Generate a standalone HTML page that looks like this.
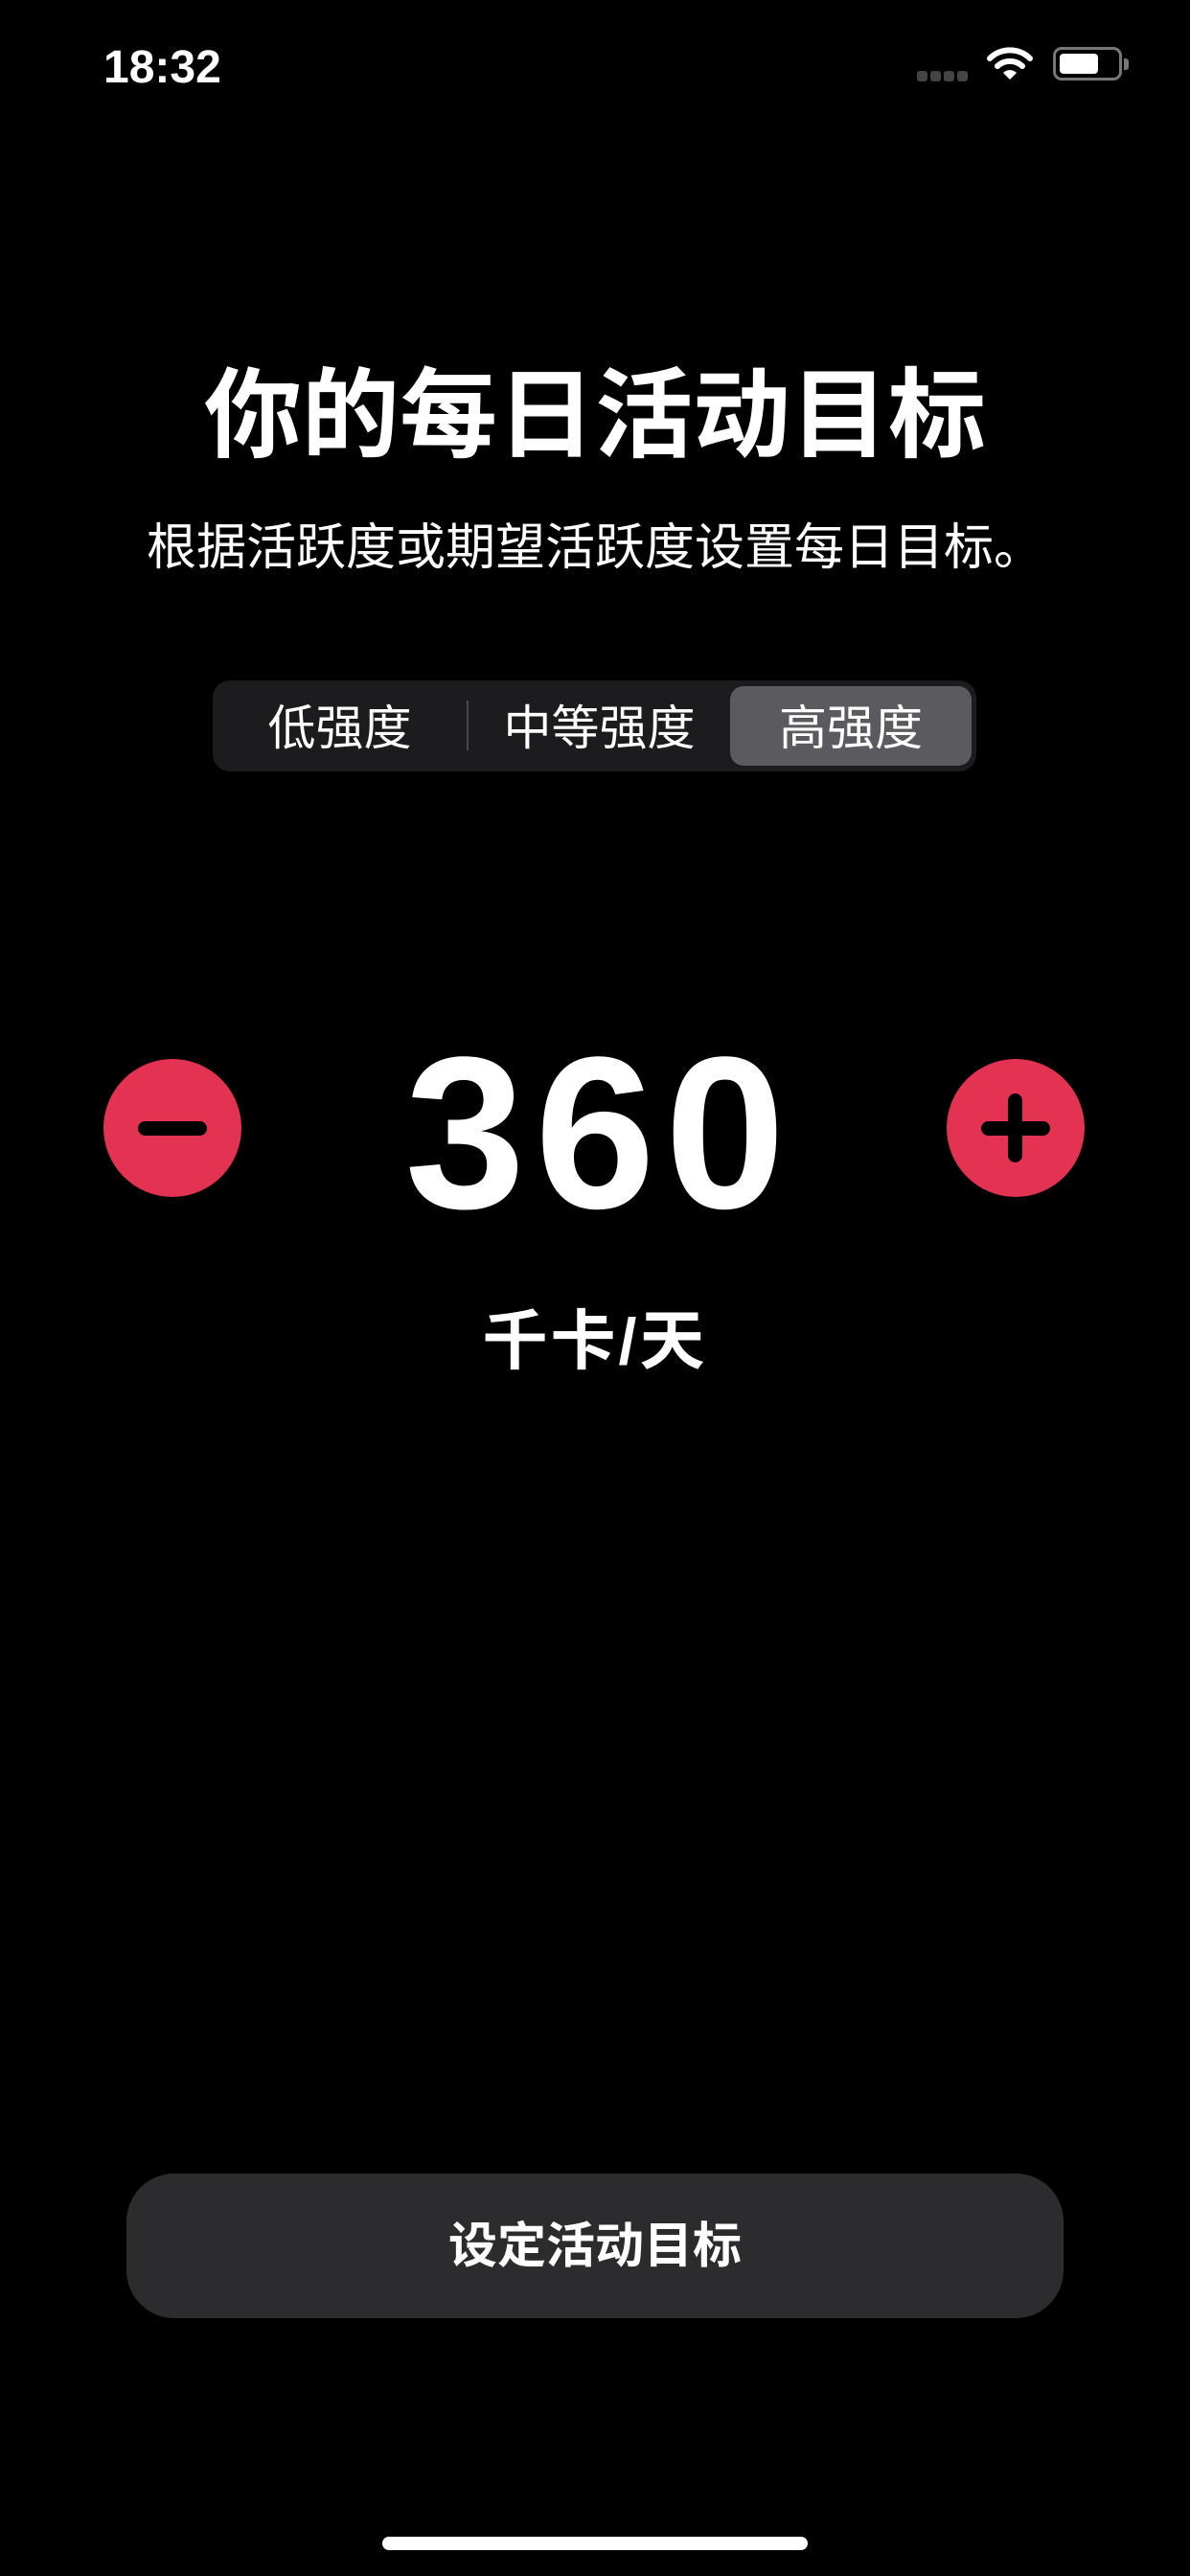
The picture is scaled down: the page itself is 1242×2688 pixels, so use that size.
<!DOCTYPE html>
<html><head><meta charset="utf-8"><style>
*{margin:0;padding:0;box-sizing:border-box}
body{width:1242px;height:2688px;background:#000;position:relative;overflow:hidden;font-family:"Liberation Sans","Noto Sans CJK SC",sans-serif;color:#fff}
.abs{position:absolute}
.c{left:0;width:1242px;text-align:center}
</style></head><body>
<div class="abs" style="left:108px;top:43px;font-size:48px;font-weight:600;line-height:56px">18:32</div>
<div class="abs" style="left:957px;top:74px;width:54px;height:12px">
<span class="abs" style="left:0;top:0;width:11px;height:11px;border-radius:3px;background:#444"></span>
<span class="abs" style="left:14px;top:0;width:11px;height:11px;border-radius:3px;background:#444"></span>
<span class="abs" style="left:28px;top:0;width:11px;height:11px;border-radius:3px;background:#444"></span>
<span class="abs" style="left:42px;top:0;width:11px;height:11px;border-radius:3px;background:#444"></span>
</div>
<svg class="abs" style="left:1030px;top:48px" width="48" height="36" viewBox="0 0 48 36"><path d="M3 13 A30 30 0 0 1 45 13" stroke="#fff" stroke-width="6" fill="none" stroke-linecap="round"/><path d="M11 21 A19 19 0 0 1 37 21" stroke="#fff" stroke-width="6" fill="none" stroke-linecap="round"/><path d="M17 28 L24 35 L31 28 A10 10 0 0 0 17 28Z" fill="#fff"/></svg>
<div class="abs" style="left:1099px;top:49px;width:72px;height:35px;border:3px solid #777;border-radius:9px"></div>
<div class="abs" style="left:1106px;top:56px;width:40px;height:21px;background:#fff;border-radius:4px"></div>
<div class="abs" style="left:1173px;top:61px;width:5px;height:12px;background:#777;border-radius:0 3px 3px 0"></div>

<div class="abs c" style="top:374px;font-size:102px;font-weight:700;line-height:120px">你的每日活动目标</div>
<div class="abs c" style="top:540px;font-size:52px;line-height:64px">根据活跃度或期望活跃度设置每日目标。</div>

<div class="abs" style="left:222px;top:710px;width:797px;height:95px;background:#1c1c1e;border-radius:18px"></div>
<div class="abs" style="left:762px;top:716px;width:252px;height:83px;background:#5b5b5f;border-radius:14px"></div>
<div class="abs" style="left:487px;top:731px;width:2px;height:52px;background:#48484a"></div>
<div class="abs" style="left:222px;top:730px;width:265px;text-align:center;font-size:50px;line-height:60px">低强度</div>
<div class="abs" style="left:489px;top:730px;width:273px;text-align:center;font-size:50px;line-height:60px">中等强度</div>
<div class="abs" style="left:762px;top:730px;width:252px;text-align:center;font-size:50px;line-height:60px">高强度</div>

<div class="abs" style="left:108px;top:1105px;width:144px;height:144px;border-radius:50%;background:#e33252"></div>
<div class="abs" style="left:144px;top:1170px;width:72px;height:15px;border-radius:8px;background:#000"></div>
<div class="abs" style="left:988px;top:1105px;width:144px;height:144px;border-radius:50%;background:#e33252"></div>
<div class="abs" style="left:1024px;top:1170px;width:72px;height:15px;border-radius:8px;background:#000"></div>
<div class="abs" style="left:1052px;top:1141px;width:15px;height:72px;border-radius:8px;background:#000"></div>

<div class="abs c" style="top:1052px;font-size:226px;font-weight:700;line-height:260px;letter-spacing:10px;padding-left:10px">360</div>
<div class="abs c" style="top:1360px;font-size:68px;font-weight:700;line-height:80px;letter-spacing:3px">千卡/天</div>

<div class="abs" style="left:132px;top:2268px;width:978px;height:151px;background:#2c2c2e;border-radius:50px"></div>
<div class="abs c" style="top:2313px;font-size:51px;font-weight:700;line-height:62px">设定活动目标</div>

<div class="abs" style="left:399px;top:2647px;width:444px;height:14px;border-radius:7px;background:#fff"></div>
</body></html>
